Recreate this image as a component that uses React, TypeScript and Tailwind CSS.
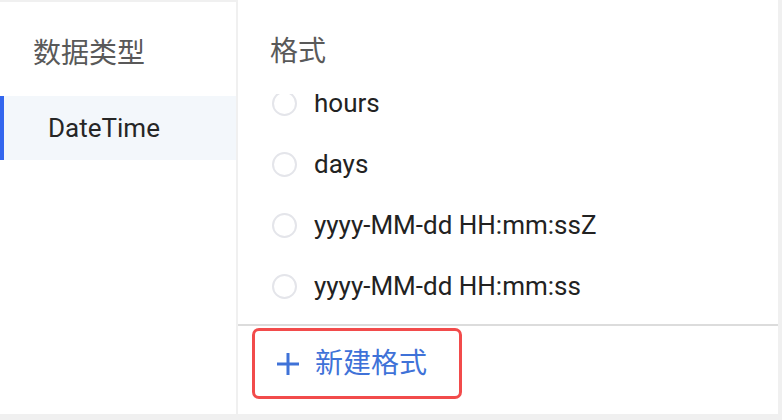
const formats = ['hours', 'days', 'yyyy-MM-dd HH:mm:ssZ', 'yyyy-MM-dd HH:mm:ss'];

function Radio() {
  return <span className="w-[25px] h-[25px] rounded-full border-2 border-[#e4e5ea] bg-white shrink-0" />;
}

export default function App() {
  return (
    <div
      className="w-[782px] h-[420px] bg-[#f0f0f0] flex overflow-hidden"
      style={{ fontFamily: 'Roboto, "Noto Sans CJK SC", sans-serif' }}
    >
      {/* 左侧：数据类型 */}
      <div className="w-[236px] mt-[2px] h-[412px] bg-white flex flex-col">
        <div className="h-[94px] pl-[33px] pt-[30px] text-[28px] leading-[44px] text-[#595959]">数据类型</div>
        <div className="h-[64px] bg-[#f3f7fb] border-l-4 border-[#3366ee] flex items-center pl-[44px] text-[26px] text-[#262626]">
          DateTime
        </div>
      </div>

      {/* 右侧：格式 */}
      <div className="ml-[2px] w-[540px] h-[414px] bg-white flex flex-col">
        <div className="h-[94px] pl-[32px] pt-[30px] text-[28px] leading-[44px] text-[#595959]">格式</div>
        <div className="h-[230px] overflow-hidden">
          <div className="-mt-[21px] flex flex-col">
            {formats.map((f) => (
              <div key={f} className="h-[61px] flex items-center pl-[34px] gap-[17px] text-[26px] leading-none text-[#222]">
                <Radio />
                <span className="pb-[2px]">{f}</span>
              </div>
            ))}
          </div>
        </div>
        <div className="h-[2px] bg-[#dcdcdc]" />
        <div className="pl-[14px] pt-[2px]">
          <button className="w-[210px] h-[71px] border-[3px] border-[#f24b4b] rounded-[7px] flex items-center pl-[20px] gap-[14px] text-[#3f72d8] text-[28px]">
            <svg width="26" height="26" viewBox="0 0 26 26" className="shrink-0">
              <path d="M13 2v22M2 13h22" stroke="currentColor" strokeWidth="3" />
            </svg>
            <span>新建格式</span>
          </button>
        </div>
      </div>
    </div>
  );
}
